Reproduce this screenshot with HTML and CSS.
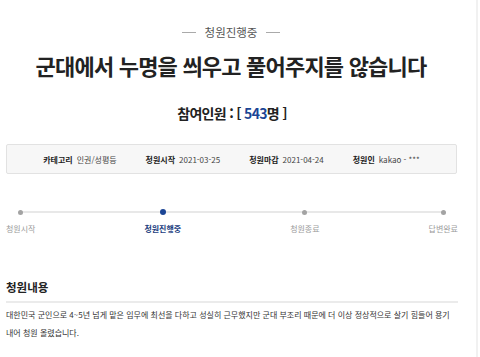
FILE: index.html
```html
<!DOCTYPE html>
<html lang="ko">
<head>
<meta charset="utf-8">
<link rel="stylesheet" href="styles.css">
</head>
<body>
<div class="page">
  <div class="content">
    <div class="status"><span class="dash"></span><span class="status-text">청원진행중</span><span class="dash"></span></div>
    <h1 class="title">군대에서 누명을 씌우고 풀어주지를 않습니다</h1>
    <div class="count">참여인원 : [ <span class="num">543</span>명 ]</div>
    <div class="info">
      <div class="info-item"><b>카테고리</b><span>인권/성평등</span></div>
      <div class="info-item"><b>청원시작</b><span>2021-03-25</span></div>
      <div class="info-item"><b>청원마감</b><span>2021-04-24</span></div>
      <div class="info-item"><b>청원인</b><span>kakao - ***</span></div>
    </div>
    <div class="progress">
      <div class="step"><span class="dot"></span><span class="label">청원시작</span></div>
      <div class="step active"><span class="dot"></span><span class="label">청원진행중</span></div>
      <div class="step"><span class="dot"></span><span class="label">청원종료</span></div>
      <div class="step"><span class="dot"></span><span class="label">답변완료</span></div>
    </div>
    <h2 class="section">청원내용</h2>
    <p class="body">대한민국 군인으로 4~5년 넘게 맡은 임무에 최선을 다하고 성실히 근무했지만 군대 부조리 때문에 더 이상 정상적으로 살기 힘들어 용기 내어 청원 올렸습니다.</p>
  </div>
</div>
</body>
</html>
```

FILE: styles.css
```css
* { box-sizing: border-box; }
html, body { margin: 0; padding: 0; background: #fff; }
body {
  font-family: "Noto Sans CJK KR", "Noto Sans", sans-serif;
  color: #333;
}
.page {
  width: 478px;
  height: 357px;
  border-right: 2px solid #f1f1f1;
  overflow: hidden;
}
.content {
  width: 458px;
  padding-left: 6px;
}
.status {
  margin-top: 24px;
  display: flex;
  justify-content: center;
  align-items: center;
  gap: 9px;
  height: 16px;
  padding-right: 2px;
}
.dash {
  width: 14px;
  height: 1px;
  background: #aaa;
}
.status-text {
  font-size: 11.5px;
  color: #555;
  line-height: 16px;
}
.title {
  margin: 9px 0 0;
  text-align: center;
  font-size: 22px;
  line-height: 32px;
  font-weight: 700;
  color: #222;
  letter-spacing: -0.8px;
  white-space: nowrap;
  padding-right: 2px;
}
.count {
  margin-top: 22px;
  text-align: center;
  font-size: 14px;
  line-height: 20px;
  font-weight: 700;
  color: #222;
  letter-spacing: -0.7px;
}
.num { color: #1b4595; }
.info {
  margin-top: 21px;
  height: 30px;
  width: 451px;
  background: #f7f7f7;
  border: 1px solid #e2e2e2;
  border-radius: 2px;
  display: flex;
  justify-content: center;
  align-items: center;
  gap: 29px;
  font-size: 8px;
  color: #444;
}
.info-item { display: flex; gap: 4px; align-items: center; }
.info-item b { font-weight: 700; color: #222; }
.progress {
  position: relative;
  margin-top: 35px;
  width: 452px;
  display: flex;
  justify-content: space-between;
}
.progress::before {
  content: "";
  position: absolute;
  left: 14px;
  right: 16px;
  top: 2px;
  height: 2px;
  background: #e8e8e8;
}
.step {
  display: flex;
  flex-direction: column;
  align-items: center;
  gap: 8px;
  position: relative;
}
.dot {
  width: 5px;
  height: 5px;
  margin-top: 0.5px;
  border-radius: 50%;
  background: #a3a3a3;
}
.step.active .dot {
  width: 6px;
  height: 6px;
  margin-top: 0;
  background: #1b4595;
}
.label {
  font-size: 8px;
  line-height: 12px;
  color: #9a9a9a;
}
.step.active .label { color: #1b3d7e; font-weight: 700; }
.section {
  margin: 44px 0 0;
  width: 452px;
  font-size: 11.5px;
  line-height: 16px;
  font-weight: 700;
  color: #222;
  padding-bottom: 6px;
  border-bottom: 2px solid #ebebeb;
}
.body {
  margin: 3px 0 0;
  width: 450px;
  font-size: 8px;
  line-height: 18px;
  color: #333;
}
```
